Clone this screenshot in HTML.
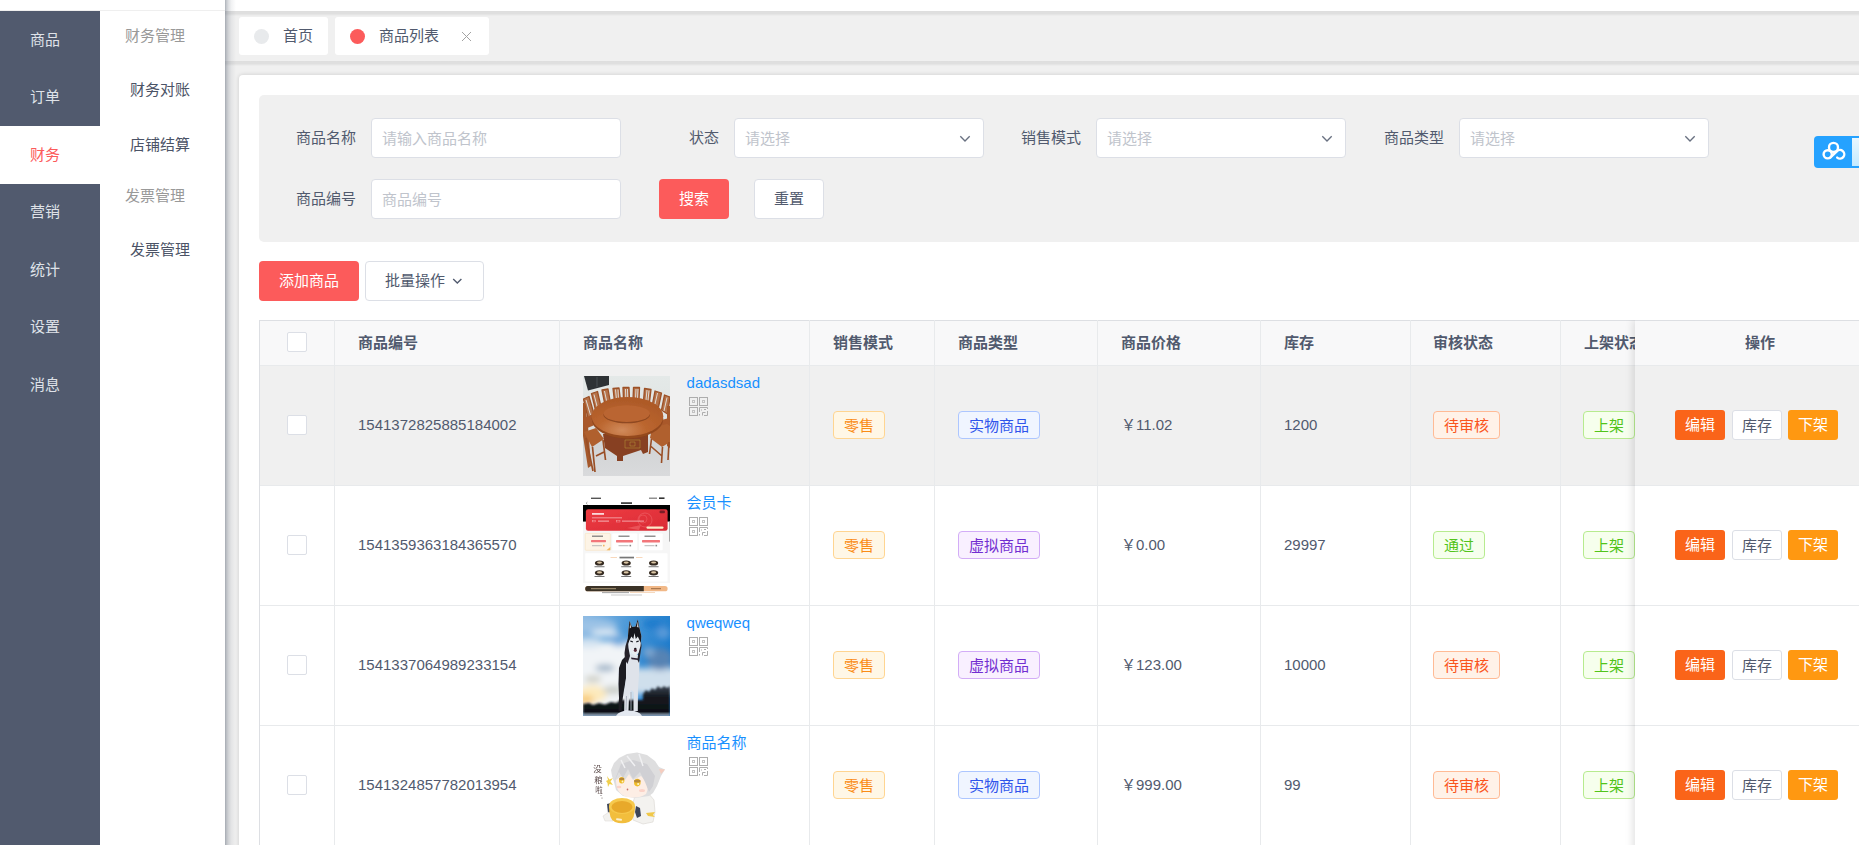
<!DOCTYPE html>
<html lang="zh-CN">
<head>
<meta charset="utf-8">
<title>商品列表</title>
<style>
*{box-sizing:border-box;margin:0;padding:0}
html,body{width:1859px;height:845px;overflow:hidden;background:#fff}
body{position:relative;font-family:"Liberation Sans","Noto Sans CJK SC",sans-serif;font-size:15px;color:#515a6e;line-height:1}
.abs{position:absolute}
/* top header */
#topbar{position:absolute;left:0;top:0;width:1859px;height:11px;background:#fff;z-index:3}
.hsh{position:absolute;left:0;width:1634px;height:5px;background:linear-gradient(180deg,rgba(0,0,0,.075),rgba(0,0,0,.07) 55%,rgba(0,0,0,0));z-index:6}
#topline{position:absolute;left:0;top:10px;width:225px;height:1px;background:#efefef;z-index:31}
/* sidebar */
#side{position:absolute;left:0;top:11px;width:100px;height:834px;background:#515a6e;z-index:20}
#side .it{position:absolute;left:0;width:100px;height:58px;line-height:58px;padding-left:30px;color:#dfe2e8;font-size:15px}
#side .it.on{background:#fff;color:#fc5b5b}
#sub{position:absolute;left:100px;top:11px;width:125px;height:834px;background:#fff;z-index:20}
#sub .g{position:absolute;left:25px;color:#999;font-size:15px;height:20px;line-height:20px}
#sub .m{position:absolute;left:30px;color:#4b5366;font-size:15px;height:20px;line-height:20px}
/* main */
#main{position:absolute;left:225px;top:11px;width:1634px;height:834px;background:#f0f0f0;overflow:hidden}
#lshadow{position:absolute;left:224.5px;top:0;width:11px;height:845px;background:linear-gradient(90deg,rgba(90,100,115,.5),rgba(90,100,115,.34) 14%,rgba(90,100,115,.19) 34%,rgba(90,100,115,.08) 60%,rgba(90,100,115,0));z-index:40}
#tabs{position:absolute;left:0;top:0;width:1634px;height:50px;background:#f0f0f0;z-index:5}
.tab{position:absolute;top:6px;height:38px;background:#fff;border-radius:3px;font-size:15px;color:#515a6e;line-height:38px}
.tab .dot{position:absolute;top:12px;width:15px;height:15px;border-radius:50%}
#card{position:absolute;left:14px;top:64px;width:1700px;height:900px;background:#fff;border-radius:4px;box-shadow:0 0 4px rgba(0,0,0,.16)}

.panel{position:absolute;background:#f0f0f0;border-radius:5px}
.lbl{position:absolute;height:20px;line-height:20px;font-size:15px;color:#515a6e;white-space:nowrap}
.inp{position:absolute;width:250px;height:40px;background:#fff;border:1px solid #dcdfe6;border-radius:4px;font-size:15px;line-height:38px;padding-left:10px}
.inp .ph{color:#c0c4cc;position:relative;top:1px}
.inp .arr{position:absolute;right:12px;top:16px}
.btn{position:absolute;height:40px;line-height:40px;border-radius:4px;text-align:center;font-size:15px;white-space:nowrap}
.btn.red{background:#fc5b5b;color:#fff}
.btn.wht{background:#fff;border:1px solid #dcdfe6;color:#515a6e;line-height:38px}
.cloud{position:absolute;width:60px;height:32px;border-radius:4px;background:#25a2ff}
.cloud .cl2{position:absolute;left:38px;top:2px;width:22px;height:28px;background:linear-gradient(180deg,#e8f7ff,#c4eaff)}
.tbl{position:absolute;width:1700px;height:600px;font-size:15px;overflow:hidden}
.tbl>*, .fix>*{position:absolute}
.thead{left:0;top:1px;width:1700px;height:44px;background:#f8f8f9}
.row{left:0;width:1700px;height:119px}
.row.hov{background:#f0f0f0}
.hl{left:0;width:1700px;height:1px;background:#e8eaec}
.vl{top:0;width:1px;height:600px;background:#e8eaec}
.th{top:13px;height:20px;line-height:20px;font-weight:bold;color:#515a6e;white-space:nowrap}
.td{height:20px;line-height:20px;color:#515a6e;white-space:nowrap}
.td.lnk{color:#1890ff}
.cb{width:20px;height:20px;border:1px solid #dcdfe6;border-radius:2px;background:#fff}
.pimg{width:87px;height:100px;overflow:hidden}
.tag{height:28px;line-height:27px;padding:0 10px;border:1px solid;border-radius:4px;font-size:15px;white-space:nowrap}
.t-or{border-color:#ffd591;background:#fff7e6;color:#fa8c16}
.t-bl{border-color:#adc6ff;background:#f0f5ff;color:#2f54eb}
.t-pu{border-color:#d3adf7;background:#f9f0ff;color:#722ed1}
.t-vo{border-color:#ffbb96;background:#fff2e8;color:#fa541c}
.t-gr{border-color:#b7eb8f;background:#f6ffed;color:#52c41a}
.fix{top:0;width:250px;height:600px;background:#fff;box-shadow:-2px 0 8px rgba(0,0,0,.12)}
.sb{width:50px;height:30px;line-height:30px;border-radius:3px;text-align:center;font-size:15px}
</style>
</head>
<body>
<div id="topbar"></div><div id="lshadow"></div><div id="topline"></div>
<div id="side">
<div class="it" style="top:0">商品</div>
<div class="it" style="top:57px">订单</div>
<div class="it on" style="top:115px">财务</div>
<div class="it" style="top:172px">营销</div>
<div class="it" style="top:230px">统计</div>
<div class="it" style="top:287px">设置</div>
<div class="it" style="top:345px">消息</div>
</div>
<div id="sub">
<div class="g" style="top:15px">财务管理</div>
<div class="m" style="top:69px">财务对账</div>
<div class="m" style="top:124px">店铺结算</div>
<div class="g" style="top:175px">发票管理</div>
<div class="m" style="top:229px">发票管理</div>
</div>
<div id="main">
<div class="hsh" style="top:0"></div><div class="hsh" style="top:50px"></div>
<div id="tabs">
<div class="tab" style="left:14px;width:89px"><span class="dot" style="left:15px;background:#e8eaec"></span><span class="abs" style="left:44px">首页</span></div>
<div class="tab" style="left:110px;width:154px"><span class="dot" style="left:15px;background:#fc5b5b"></span><span class="abs" style="left:44px">商品列表</span>
<svg class="abs" style="left:126px;top:14px" width="11" height="11" viewBox="0 0 11 11"><path d="M1 1 L10 10 M10 1 L1 10" stroke="#a3a3a3" stroke-width="1" fill="none"/></svg></div>
</div>
<div id="card">
<!--CARD-->
<div class="panel" style="left:20px;top:20px;width:1640px;height:147px"></div>
<div class="lbl" style="right:1583px;top:53px">商品名称</div>
<div class="inp" style="left:132px;top:43px"><span class="ph">请输入商品名称</span></div>
<div class="lbl" style="right:1220px;top:53px">状态</div>
<div class="inp" style="left:495px;top:43px"><span class="ph">请选择</span><svg class="arr" width="12" height="8" viewBox="0 0 12 8"><path d="M1.3 1.3 L6 6 L10.7 1.3" fill="none" stroke="#687080" stroke-width="1.35"/></svg></div>
<div class="lbl" style="right:858px;top:53px">销售模式</div>
<div class="inp" style="left:857px;top:43px"><span class="ph">请选择</span><svg class="arr" width="12" height="8" viewBox="0 0 12 8"><path d="M1.3 1.3 L6 6 L10.7 1.3" fill="none" stroke="#687080" stroke-width="1.35"/></svg></div>
<div class="lbl" style="right:495px;top:53px">商品类型</div>
<div class="inp" style="left:1220px;top:43px"><span class="ph">请选择</span><svg class="arr" width="12" height="8" viewBox="0 0 12 8"><path d="M1.3 1.3 L6 6 L10.7 1.3" fill="none" stroke="#687080" stroke-width="1.35"/></svg></div>
<div class="lbl" style="right:1583px;top:114px">商品编号</div>
<div class="inp" style="left:132px;top:104px"><span class="ph">商品编号</span></div>
<div class="btn red" style="left:420px;top:104px;width:70px">搜索</div>
<div class="btn wht" style="left:515px;top:104px;width:70px">重置</div>
<div class="btn red" style="left:20px;top:186px;width:100px">添加商品</div>
<div class="btn wht" style="left:126px;top:186px;width:119px;padding-right:19px">批量操作<svg class="abs" style="left:86px;top:16px" width="11" height="7" viewBox="0 0 11 7"><path d="M1.2 .9 L5.3 5 L9.4 .9" fill="none" stroke="#515a6e" stroke-width="1.35"/></svg></div>
<div class="cloud" style="left:1575px;top:61px"><div class="cl2"></div>
<svg class="abs" style="left:0;top:0" width="38" height="32" viewBox="0 0 38 32"><g fill="none" stroke="#fff" stroke-width="2.4" stroke-linecap="round"><circle cx="19.5" cy="11.4" r="4.5"/><circle cx="13.7" cy="18.3" r="4.1"/><path d="M16.2 21.6 L22.8 15.4 A4.3 4.3 0 1 1 23.2 21.6"/></g></svg></div>
<div class="tbl" style="left:20px;top:245px">
<div class="thead"></div>
<div class="row hov" style="top:46px"></div>
<div class="hl" style="top:0px;background:#dddfe3"></div>
<div class="hl" style="top:45px"></div>
<div class="hl" style="top:165px"></div>
<div class="hl" style="top:285px"></div>
<div class="hl" style="top:405px"></div>
<div class="vl" style="left:0px;background:#dddfe3"></div>
<div class="vl" style="left:75px"></div>
<div class="vl" style="left:300px"></div>
<div class="vl" style="left:550px"></div>
<div class="vl" style="left:675px"></div>
<div class="vl" style="left:838px"></div>
<div class="vl" style="left:1001px"></div>
<div class="vl" style="left:1151px"></div>
<div class="vl" style="left:1301px"></div>
<div class="th" style="left:99px">商品编号</div>
<div class="th" style="left:324px">商品名称</div>
<div class="th" style="left:574px">销售模式</div>
<div class="th" style="left:699px">商品类型</div>
<div class="th" style="left:862px">商品价格</div>
<div class="th" style="left:1025px">库存</div>
<div class="th" style="left:1174px">审核状态</div>
<div class="th" style="left:1325px">上架状态</div>
<div class="cb" style="left:28px;top:12px"></div>
<div class="cb" style="left:28px;top:95px"></div>
<div class="td" style="left:99px;top:95px">1541372825885184002</div>
<div class="pimg" style="left:324px;top:56px"><svg width="87" height="100" viewBox="0 0 87 100"><defs><filter id="b1" x="-5%" y="-5%" width="110%" height="110%"><feGaussianBlur stdDeviation=".55"/></filter><linearGradient id="w1" x1="0" y1="0" x2="0" y2="1"><stop offset="0" stop-color="#e4e9e8"/><stop offset=".45" stop-color="#dfe3e2"/><stop offset=".7" stop-color="#d2d4d5"/><stop offset="1" stop-color="#d9dadc"/></linearGradient><radialGradient id="tt" cx=".42" cy=".85" r=".75"><stop offset="0" stop-color="#d08a5b"/><stop offset=".45" stop-color="#bb662f"/><stop offset="1" stop-color="#ae5a28"/></radialGradient><clipPath id="c1"><rect width="87" height="100"/></clipPath></defs><g clip-path="url(#c1)"><rect width="87" height="100" fill="url(#w1)"/><g filter="url(#b1)"><path d="M1 0H26V9L5 14.5Z" fill="#2e3135"/><path d="M14 1V11" stroke="#50555b" stroke-width=".8"/><g fill="#b57248" stroke="#9c5128" stroke-width="1.3" stroke-linejoin="round"><path d="M0.5 23 L6 20.5 L11 38 L5 42Z"/><path d="M8.5 17.5 L14.5 15.5 L18 31 L12.5 34Z"/><path d="M19 14 L25 13 L27.5 27 L22 29Z"/><path d="M30 12.5 L36 12 L37.5 25 L31.5 25.5Z"/><path d="M40 11.5 L46 11.5 L46.5 24 L40.5 24Z"/><path d="M50.5 11.5 L56.5 11.5 L56 24 L50 24Z"/><path d="M61.5 12.5 L68 13.5 L66.5 26 L60.5 25Z"/><path d="M72 15 L78.5 17 L75.5 31 L69.5 28Z"/><path d="M81.5 19 L87 21 L84.5 38 L78.5 34Z"/></g><g stroke="#e3e6e5" stroke-width=".9" fill="none"><path d="M3 24 L7.5 39 M11 18.5 L14.5 32 M21.5 15 L24 27 M32.5 13.5 L33.5 24 M35 13.5 L35.5 24 M42.5 13 L42.8 23 M44.5 13 L44.8 23 M53 13 L52.5 23 M55 13 L54.5 23 M64 14 L63 24 M66 14.5 L65 24.5 M74.5 17 L72 28 M84 21.5 L81 35"/></g><path d="M0 27 L2 27 L5 50 L8 90 L5 92 L0 60Z" fill="#a5582c"/><path d="M0 42 L10 39 L14 48 L2 53Z" fill="#a9592c"/><path d="M1 56 L13 52 L21 63 L9 71 Z" fill="#b0602f"/><path d="M3 62 L10 95 M9.5 71 L12 96 M20 64 L22.5 84 M13 80 L21 76" stroke="#9a4f27" stroke-width="1.7" fill="none"/><path d="M84 30 L87 30 V72 L84 70Z" fill="#a5582c"/><path d="M75 45 L86 42 L87 52 L78 55Z" fill="#a9592c"/><path d="M69 52 L84 48 L87 50 V66 L79 71 L67 62Z" fill="#b0602f"/><path d="M68.5 63 L66.5 78 M79.5 71 L78.5 87 M86 66 L85 84 M67.5 70 L79 80" stroke="#9a4f27" stroke-width="1.6" fill="none"/><path d="M20 58 L65 58 L65 76 L60 78 L58 74 L40 80 L40 85 L34 85 L34 80 L22 72Z" fill="#874120"/><path d="M42 64 h15 v8 h-15z M47 66 h5 v4 h-5z" fill="none" stroke="#b28a3c" stroke-width=".6"/><ellipse cx="44.5" cy="43" rx="35.8" ry="19.5" fill="#94491f"/><ellipse cx="44.5" cy="40.5" rx="35.8" ry="19.5" fill="url(#tt)"/><ellipse cx="43.7" cy="38.8" rx="23.3" ry="8.5" fill="#8f4820"/><ellipse cx="43.7" cy="37.6" rx="23.3" ry="8.3" fill="#ba6531"/></g></g></svg></div>
<div class="td lnk" style="left:427.6px;top:53px">dadasdsad</div>
<svg class="abs" style="left:430px;top:77px" width="19" height="19" viewBox="0 0 19 19"><g fill="none" stroke="#adadad" stroke-width="1"><rect x=".5" y=".5" width="8" height="8"/><rect x="10.5" y=".5" width="8" height="8"/><rect x=".5" y="10.5" width="8" height="8"/><path d="M10.5 18.5 V17 M10.5 15 V10.5 H18.5 V12 M18.5 14 V18.5 H15 M13.5 18.5 V15.5 H16.5 M12.5 13.5 V12.5 M15 12.5 H17"/><g stroke="#c2c2c2"><rect x="3.5" y="3.5" width="2" height="2"/><rect x="13.5" y="3.5" width="2" height="2"/><rect x="3.5" y="13.5" width="2" height="2"/></g></g></svg>
<div class="tag t-or" style="left:574px;top:91px">零售</div>
<div class="tag t-bl" style="left:699px;top:91px">实物商品</div>
<div class="td" style="left:862px;top:95px">￥11.02</div>
<div class="td" style="left:1025px;top:95px">1200</div>
<div class="tag t-vo" style="left:1174px;top:91px">待审核</div>
<div class="tag t-gr" style="left:1324px;top:91px">上架</div>
<div class="cb" style="left:28px;top:215px"></div>
<div class="td" style="left:99px;top:215px">1541359363184365570</div>
<div class="pimg" style="left:324px;top:176px"><svg width="87" height="100" viewBox="0 0 87 100"><defs><filter id="b2" x="-5%" y="-5%" width="110%" height="110%"><feGaussianBlur stdDeviation=".35"/></filter><linearGradient id="rc" x1="0" y1="0" x2="1" y2="1"><stop offset="0" stop-color="#ee3c42"/><stop offset="1" stop-color="#d92a35"/></linearGradient></defs><rect width="87" height="100" fill="#fff"/><g filter="url(#b2)"><rect x="8" y="1.6" width="10" height="1.4" fill="#555"/><rect x="66" y="1.6" width="8" height="1.2" fill="#777"/><rect x="76" y="1.4" width="5.5" height="1.6" fill="#333"/><rect x="38" y="6.2" width="11" height="1.8" fill="#444"/><path d="M4.5 6 L3 7.2 L4.5 8.4" stroke="#666" stroke-width=".5" fill="none"/><rect x="0" y="25.6" width="87" height="61.2" fill="#f6f6f6"/><rect x="0" y="9" width="87" height="16.6" fill="#050505"/><rect x="2.9" y="13.3" width="81.7" height="21.5" rx="2.2" fill="url(#rc)"/><circle cx="62" cy="24" r="7" fill="none" stroke="#f0666b" stroke-width=".6"/><circle cx="60" cy="23" r="4" fill="none" stroke="#f0666b" stroke-width=".5"/><path d="M44 32 L58 29 L56 34Z" fill="#ea5258"/><rect x="9" y="17" width="12" height="1.8" fill="#fbd9da"/><rect x="9" y="21.4" width="30" height=".9" fill="#f3a4a7"/><rect x="9.5" y="24.3" width="3" height="1.6" fill="none" stroke="#f6b5b8" stroke-width=".4"/><rect x="15" y="24.6" width="11" height="1" fill="#f6b5b8"/><rect x="33.5" y="24.2" width="3.5" height="1.8" fill="none" stroke="#f6b5b8" stroke-width=".4"/><rect x="39" y="24.6" width="22" height="1" fill="#f3a4a7"/><rect x="63.5" y="30.4" width="17" height="2.4" rx="1.2" fill="#fde9c9"/><rect x="76.5" y="14.6" width="5.5" height="2.6" rx="1.3" fill="#7b1f26"/><rect x="2.2" y="37.4" width="25.1" height="16.9" rx=".8" fill="#fdf4e6" stroke="#f7dfb6" stroke-width=".5"/><path d="M27.3 51 V54.3 H23.5Z" fill="#f2b661"/><rect x="29.2" y="37.4" width="25.1" height="16.9" rx=".8" fill="#fff"/><rect x="56" y="37.4" width="23.7" height="16.9" rx=".8" fill="#fff"/><g fill="#777"><rect x="9" y="39.6" width="11" height="1.2"/><rect x="35.5" y="39.6" width="11" height="1.2"/><rect x="61.5" y="39.6" width="11" height="1.2"/></g><g fill="#f2767a"><rect x="8" y="44" width="15" height="2.2" rx=".6"/><rect x="33" y="44" width="17" height="2.4" rx=".6"/><rect x="59" y="44" width="18" height="2.4" rx=".6"/></g><g fill="#b9b9b9"><rect x="9" y="49.2" width="10" height="1"/><rect x="35.5" y="49.2" width="10" height="1"/><rect x="61.5" y="49.2" width="10" height="1"/></g><rect x="20" y="48.8" width="1.6" height="1.6" fill="#f2b661"/><rect x="46.5" y="48.8" width="1.6" height="1.6" fill="#888"/><rect x="72.5" y="48.8" width="1.6" height="1.6" fill="#888"/><rect x="2.2" y="57.3" width="82.4" height="28.2" rx=".8" fill="#fff"/><rect x="36.5" y="60.7" width="14.5" height="1.7" fill="#777"/><rect x="27.5" y="61.3" width="6.5" height=".5" fill="#f0b078"/><rect x="53" y="61.3" width="6.5" height=".5" fill="#f0b078"/><g fill="#362c21"><ellipse cx="16.5" cy="67" rx="4.6" ry="2.6"/><ellipse cx="43.2" cy="67" rx="4.6" ry="2.6"/><ellipse cx="70.6" cy="67" rx="4.6" ry="2.6"/><ellipse cx="16.5" cy="76.8" rx="4.6" ry="2.6"/><ellipse cx="43.2" cy="76.8" rx="4.6" ry="2.6"/><ellipse cx="70.6" cy="76.8" rx="4.6" ry="2.6"/></g><g fill="#dcc7a6"><ellipse cx="16.5" cy="66.6" rx="2.5" ry="1.1"/><ellipse cx="43.2" cy="66.6" rx="2.5" ry="1.1"/><ellipse cx="70.6" cy="66.6" rx="2.5" ry="1"/><ellipse cx="16.5" cy="76.4" rx="2.5" ry="1.1"/><ellipse cx="43.2" cy="76.4" rx="2.5" ry="1.1"/><ellipse cx="70.6" cy="76.4" rx="2.5" ry="1.1"/></g><g fill="#666"><rect x="11.5" y="70.3" width="10" height=".9"/><rect x="38.2" y="70.3" width="10" height=".9"/><rect x="65.6" y="70.3" width="10" height=".9"/><rect x="11.5" y="80" width="10" height=".9"/><rect x="38.2" y="80" width="10" height=".9"/><rect x="65.6" y="80" width="10" height=".9"/></g><rect x="2.2" y="90" width="82.4" height="5.3" rx="2.65" fill="#f1b887"/><path d="M4.85 90 H60.8 V95.3 H4.85 A2.65 2.65 0 0 1 4.85 90Z" fill="#3a3226"/><rect x="8" y="92.2" width="25" height="1" fill="#a89677"/><rect x="68" y="92.2" width="10" height="1" fill="#9a6a43"/><rect x="19" y="96.3" width="27" height=".8" fill="#888"/><rect x="47" y="96.3" width="25" height=".7" fill="#f3c9a3"/><rect x="28" y="98.6" width="31" height=".8" fill="#bbb"/><rect x="86.2" y="25.6" width=".8" height="20" fill="#999"/></g></svg></div>
<div class="td lnk" style="left:427.6px;top:173px">会员卡</div>
<svg class="abs" style="left:430px;top:197px" width="19" height="19" viewBox="0 0 19 19"><g fill="none" stroke="#adadad" stroke-width="1"><rect x=".5" y=".5" width="8" height="8"/><rect x="10.5" y=".5" width="8" height="8"/><rect x=".5" y="10.5" width="8" height="8"/><path d="M10.5 18.5 V17 M10.5 15 V10.5 H18.5 V12 M18.5 14 V18.5 H15 M13.5 18.5 V15.5 H16.5 M12.5 13.5 V12.5 M15 12.5 H17"/><g stroke="#c2c2c2"><rect x="3.5" y="3.5" width="2" height="2"/><rect x="13.5" y="3.5" width="2" height="2"/><rect x="3.5" y="13.5" width="2" height="2"/></g></g></svg>
<div class="tag t-or" style="left:574px;top:211px">零售</div>
<div class="tag t-pu" style="left:699px;top:211px">虚拟商品</div>
<div class="td" style="left:862px;top:215px">￥0.00</div>
<div class="td" style="left:1025px;top:215px">29997</div>
<div class="tag t-gr" style="left:1174px;top:211px">通过</div>
<div class="tag t-gr" style="left:1324px;top:211px">上架</div>
<div class="cb" style="left:28px;top:335px"></div>
<div class="td" style="left:99px;top:335px">1541337064989233154</div>
<div class="pimg" style="left:324px;top:296px"><svg width="87" height="100" viewBox="0 0 87 100"><defs><filter id="b3" x="-20%" y="-20%" width="140%" height="140%"><feGaussianBlur stdDeviation="3"/></filter><filter id="b3s" x="-10%" y="-10%" width="120%" height="120%"><feGaussianBlur stdDeviation=".5"/></filter><filter id="b3m" x="-20%" y="-20%" width="140%" height="140%"><feGaussianBlur stdDeviation="1.2"/></filter><linearGradient id="sk" x1="0" y1="0" x2="1" y2=".35"><stop offset="0" stop-color="#8fbbe3"/><stop offset=".5" stop-color="#4a98d8"/><stop offset="1" stop-color="#1b7acb"/></linearGradient><linearGradient id="tr" x1="0" y1="0" x2="0" y2="1"><stop offset="0" stop-color="#3a4552"/><stop offset=".35" stop-color="#161a20"/><stop offset="1" stop-color="#0b0d11"/></linearGradient><clipPath id="c3"><rect width="87" height="100"/></clipPath></defs><g clip-path="url(#c3)"><rect width="87" height="100" fill="url(#sk)"/><g filter="url(#b3)"><rect x="-10" y="26" width="62" height="70" fill="#f1f4f7"/><rect x="40" y="52" width="60" height="26" fill="#cfdfec"/><ellipse cx="12" cy="10" rx="22" ry="7" fill="#9cc3e6"/><ellipse cx="22" cy="17" rx="14" ry="3.5" fill="#dce9f4"/><ellipse cx="6" cy="27" rx="14" ry="5" fill="#d5e4f1"/><ellipse cx="36" cy="24" rx="9" ry="6" fill="#6ea9dd"/><ellipse cx="22" cy="52" rx="10" ry="3.5" fill="#9db2c6"/><ellipse cx="10" cy="63" rx="9" ry="3" fill="#c9c9bd"/><ellipse cx="9" cy="78" rx="15" ry="9" fill="#fdeabd"/><ellipse cx="3" cy="84" rx="8" ry="4.5" fill="#f7c870"/><ellipse cx="30" cy="74" rx="10" ry="4" fill="#c8ccc6"/><ellipse cx="77" cy="43" rx="13" ry="11" fill="#5783b4"/><ellipse cx="66" cy="36" rx="6" ry="5" fill="#7ea6d0"/><ellipse cx="80" cy="17" rx="7" ry="6" fill="#5a9ad8"/><ellipse cx="70" cy="8" rx="10" ry="5" fill="#1f7ccd"/></g><g filter="url(#b3m)"><path d="M0 88 L6 87 L10 89 L16 87 L22 88.5 L28 86 L33 87 L38 84 L60 84 L60 78 L63 74 L66 76 L69 72 L72 74 L75 70 L78 72.5 L81 70 L84 72 L87 70 V100 H0Z" fill="url(#tr)"/><rect x="0" y="97.8" width="87" height="3" fill="#8799ad"/></g><g filter="url(#b3s)"><path d="M36 52 L39 44 L43 40 L44 47 L43.5 60 L41 74 L39.5 84 L38.5 95 L35.5 95 L36 82 L35.5 68Z" fill="#1c1c23"/><path d="M43 40 L46 38 L55 39 L56.5 46 L56 60 L55 72 L54.8 95 L50.5 95 L50.5 76 L48 74 L46 80 L45.5 95 L41.2 95 L41.5 76 L43 62Z" fill="#dfe3ea"/><path d="M42.5 30 L45 22 L45.5 32 L47 40 L44.5 48 L42 44 L41.5 37Z" fill="#25222b"/><path d="M57.5 22 L58.5 30 L57 40 L56 47 L54.5 44 L55.5 34Z" fill="#25222b"/><path d="M45.5 13 L46.5 4.7 L49 11 L52.5 10.5 L54.8 3.3 L56.5 12 L58.4 20 L57.5 30 L55.5 37 L52.5 40 L49 38 L46 32 L44.8 22Z" fill="#e8ebf0"/><path d="M45.5 13 L46.5 4.7 L49 11 L52.5 10.5 L54.8 3.3 L56.5 12 L58.4 20 L57.8 27 L56 23 L54.8 20.5 L52.8 23 L51.5 17 L50.3 23 L48.5 20.5 L46.5 24 L45.2 28 L44.8 22Z" fill="#15161b"/><path d="M47 6.5 L48.2 11.5 L46.7 12.5Z M54.8 5.5 L55.7 11.5 L53.8 11Z" fill="#cfc9cc"/><path d="M47.3 25 L49.8 25.8 M53.3 25.8 L55.8 25" stroke="#1b1c22" stroke-width="1.3" fill="none"/><ellipse cx="52.3" cy="34.3" rx="1.5" ry="1.7" fill="#5b2c3a"/><ellipse cx="52.3" cy="32.6" rx="1.2" ry=".9" fill="#16161b"/><path d="M48 41.5 L55.5 42.5 L54.8 44 L48.5 43.2Z" fill="#2c1f2e"/><path d="M48 76 L48 94 M43.5 80 L43 94" stroke="#a9afbb" stroke-width=".9" fill="none"/><path d="M33 100 Q36 94.5 46 94.5 Q56 94.5 59 100Z" fill="#e3e8f0"/></g></g></g></svg></div>
<div class="td lnk" style="left:427.6px;top:293px">qweqweq</div>
<svg class="abs" style="left:430px;top:317px" width="19" height="19" viewBox="0 0 19 19"><g fill="none" stroke="#adadad" stroke-width="1"><rect x=".5" y=".5" width="8" height="8"/><rect x="10.5" y=".5" width="8" height="8"/><rect x=".5" y="10.5" width="8" height="8"/><path d="M10.5 18.5 V17 M10.5 15 V10.5 H18.5 V12 M18.5 14 V18.5 H15 M13.5 18.5 V15.5 H16.5 M12.5 13.5 V12.5 M15 12.5 H17"/><g stroke="#c2c2c2"><rect x="3.5" y="3.5" width="2" height="2"/><rect x="13.5" y="3.5" width="2" height="2"/><rect x="3.5" y="13.5" width="2" height="2"/></g></g></svg>
<div class="tag t-or" style="left:574px;top:331px">零售</div>
<div class="tag t-pu" style="left:699px;top:331px">虚拟商品</div>
<div class="td" style="left:862px;top:335px">￥123.00</div>
<div class="td" style="left:1025px;top:335px">10000</div>
<div class="tag t-vo" style="left:1174px;top:331px">待审核</div>
<div class="tag t-gr" style="left:1324px;top:331px">上架</div>
<div class="cb" style="left:28px;top:455px"></div>
<div class="td" style="left:99px;top:455px">1541324857782013954</div>
<div class="pimg" style="left:324px;top:416px"><svg width="87" height="100" viewBox="0 0 87 100"><defs><filter id="b4" x="-5%" y="-5%" width="110%" height="110%"><feGaussianBlur stdDeviation=".4"/></filter></defs><rect width="87" height="100" fill="#fff"/><g filter="url(#b4)"><g font-family="'Noto Sans CJK SC',sans-serif" font-size="8.5" fill="#5b4b4a" text-anchor="middle"><text x="14.5" y="35.5">没</text><text x="15.5" y="47">粮</text><text x="16" y="56.5" font-size="7.5">啦</text></g><circle cx="18" cy="59.5" r=".5" fill="#5b4b4a"/><circle cx="19" cy="62" r=".5" fill="#5b4b4a"/><path d="M52 60 L66 58 L71 64 L72 76 L70 86 L60 88 L50 84 L49 70Z" fill="#f3f2ef" stroke="#d8d5d0" stroke-width=".6"/><path d="M53 70 L57 72 L58 80 L54 82 L52 76Z" fill="#3d4459"/><path d="M24 68 L28 67 L29 76 L25 77Z" fill="#3d4459"/><path d="M20 80 L26 76 L31 80 L30 85 L22 85Z" fill="#f3f2ef" stroke="#d8d5d0" stroke-width=".5"/><path d="M63 77 L72 76 L70 79 L72 81 L65 80Z" fill="#f0c84a"/><path d="M28 34 L31 27 L36 22 L44 18 L54 16.5 L64 19 L72 25 L76 31 L82 33.5 L78 40 L74 50 L70 57 L66 60 L52 62 L40 60 L33 54 L31 46 L29 40Z" fill="#dededf"/><path d="M33 44 Q33 58 44 61 Q56 63 63 58 Q66 52 64 46 L58 40 L50 44 L46 38 L42 44 L38 40Z" fill="#fdeee5"/><path d="M76 33 L82 33.5 L78 38Z" fill="#f5cdbf"/><path d="M31 46 L36 36 L40 42 L45 33 L50 43 L57 36 L62 46 L66 56 L70 50 L72 40 L64 28 L50 24 L38 28Z" fill="#d0d0d4"/><path d="M44 20 L52 30 M56 18 L60 30 M38 24 L42 32" stroke="#f1f1f3" stroke-width="1.4" fill="none"/><ellipse cx="38.7" cy="44.2" rx="2.7" ry="3.3" fill="#f0bd2c"/><ellipse cx="54.3" cy="46.6" rx="3.3" ry="3.8" fill="#f0bd2c"/><ellipse cx="38.7" cy="43" rx="2.7" ry="1.3" fill="#b88a3a"/><ellipse cx="54.3" cy="45" rx="3.3" ry="1.5" fill="#b88a3a"/><circle cx="39.5" cy="45.5" r=".9" fill="#fff6c8"/><circle cx="55.2" cy="48" r="1.1" fill="#fff6c8"/><ellipse cx="36" cy="51" rx="2.4" ry="1.3" fill="#fbd3c8"/><ellipse cx="59" cy="54.5" rx="3" ry="1.5" fill="#fbd3c8"/><ellipse cx="44.5" cy="53.5" rx=".8" ry="1" fill="#c9706a"/><path d="M24 40 L26.5 43.5 L30 42 L27.5 45.5 L30 49 L26.5 48 L25 51 L24.5 47 L23 45 L25 44Z" fill="#f0cf4e"/><path d="M26 70 Q26 84 32 86 Q39 88.5 46 86 Q52 84 52 70Z" fill="#f2be3c"/><ellipse cx="39" cy="70" rx="13" ry="8" fill="#f6c94d"/><ellipse cx="39" cy="71" rx="10.5" ry="6" fill="#e8a92c"/><rect x="33" y="82.5" width="6" height="2" rx="1" fill="#fbf0d0" transform="rotate(8 36 83.5)"/></g></svg></div>
<div class="td lnk" style="left:427.6px;top:413px">商品名称</div>
<svg class="abs" style="left:430px;top:437px" width="19" height="19" viewBox="0 0 19 19"><g fill="none" stroke="#adadad" stroke-width="1"><rect x=".5" y=".5" width="8" height="8"/><rect x="10.5" y=".5" width="8" height="8"/><rect x=".5" y="10.5" width="8" height="8"/><path d="M10.5 18.5 V17 M10.5 15 V10.5 H18.5 V12 M18.5 14 V18.5 H15 M13.5 18.5 V15.5 H16.5 M12.5 13.5 V12.5 M15 12.5 H17"/><g stroke="#c2c2c2"><rect x="3.5" y="3.5" width="2" height="2"/><rect x="13.5" y="3.5" width="2" height="2"/><rect x="3.5" y="13.5" width="2" height="2"/></g></g></svg>
<div class="tag t-or" style="left:574px;top:451px">零售</div>
<div class="tag t-bl" style="left:699px;top:451px">实物商品</div>
<div class="td" style="left:862px;top:455px">￥999.00</div>
<div class="td" style="left:1025px;top:455px">99</div>
<div class="tag t-vo" style="left:1174px;top:451px">待审核</div>
<div class="tag t-gr" style="left:1324px;top:451px">上架</div>
<div class="fix" style="left:1376px">
<div class="thead"></div><div class="row hov" style="top:46px"></div>
<div class="hl" style="top:0px;background:#dddfe3"></div>
<div class="hl" style="top:45px"></div>
<div class="hl" style="top:165px"></div>
<div class="hl" style="top:285px"></div>
<div class="hl" style="top:405px"></div>
<div class="th" style="left:0;width:250px;text-align:center">操作</div>
<div class="sb" style="left:40px;top:90px;background:#fa6419;color:#fff">编辑</div>
<div class="sb" style="left:97px;top:90px;background:#fff;border:1px solid #dcdfe6;color:#515a6e">库存</div>
<div class="sb" style="left:153px;top:90px;background:#ff9811;color:#fff">下架</div>
<div class="sb" style="left:40px;top:210px;background:#fa6419;color:#fff">编辑</div>
<div class="sb" style="left:97px;top:210px;background:#fff;border:1px solid #dcdfe6;color:#515a6e">库存</div>
<div class="sb" style="left:153px;top:210px;background:#ff9811;color:#fff">下架</div>
<div class="sb" style="left:40px;top:330px;background:#fa6419;color:#fff">编辑</div>
<div class="sb" style="left:97px;top:330px;background:#fff;border:1px solid #dcdfe6;color:#515a6e">库存</div>
<div class="sb" style="left:153px;top:330px;background:#ff9811;color:#fff">下架</div>
<div class="sb" style="left:40px;top:450px;background:#fa6419;color:#fff">编辑</div>
<div class="sb" style="left:97px;top:450px;background:#fff;border:1px solid #dcdfe6;color:#515a6e">库存</div>
<div class="sb" style="left:153px;top:450px;background:#ff9811;color:#fff">下架</div>
</div>
</div>
<!--/CARD-->
</div>
</div>
</body>
</html>
